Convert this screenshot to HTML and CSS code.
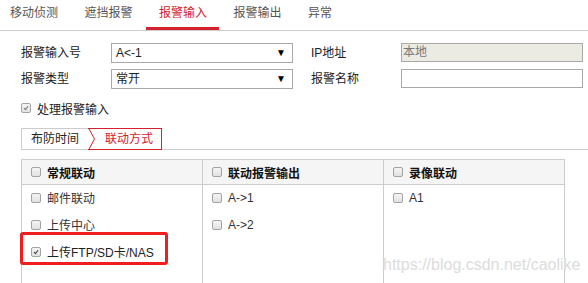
FILE: index.html
```html
<!DOCTYPE html>
<html lang="zh-CN">
<head>
    <meta charset="UTF-8">
    <title>报警输入</title>
    <link rel="stylesheet" href="styles.css">
</head>
<body>
    <div class="tabs">
        <div class="tab">移动侦测</div>
        <div class="tab">遮挡报警</div>
        <div class="tab active">报警输入</div>
        <div class="tab">报警输出</div>
        <div class="tab">异常</div>
    </div>

    <div class="form">
        <div class="grid">
            <label>报警输入号</label>
            <div class="select"><span>A&lt;-1</span><span class="arrow">▼</span></div>
            <label>IP地址</label>
            <div class="input disabled">本地</div>
            <label>报警类型</label>
            <div class="select"><span>常开</span><span class="arrow">▼</span></div>
            <label>报警名称</label>
            <div class="input"></div>
        </div>
        <div class="check-row">
            <span class="cb checked disabled"><svg viewBox="0 0 10 10"><polyline points="2.5,5 4.3,7 7.6,2.8" /></svg></span>
            <span>处理报警输入</span>
        </div>

        <div class="subtabs">
            <div class="subtab first">布防时间</div>
            <div class="subtab current">
                <svg class="chev" viewBox="0 0 8 22" width="8" height="22"><path d="M0 0.5 H8 M0 21.5 H8 M0.5 0 L6.5 11 L0.5 22" /></svg>
                <span class="label">联动方式</span>
            </div>
        </div>

        <div class="table">
            <div class="col">
                <div class="head"><span class="cb"></span>常规联动</div>
                <div class="body">
                    <div class="item"><span class="cb"></span>邮件联动</div>
                    <div class="item"><span class="cb"></span>上传中心</div>
                    <div class="item marked"><span class="cb checked"><svg viewBox="0 0 10 10"><polyline points="2.5,5 4.3,7 7.6,2.8" /></svg></span>上传FTP/SD卡/NAS</div>
                </div>
            </div>
            <div class="col">
                <div class="head"><span class="cb"></span>联动报警输出</div>
                <div class="body">
                    <div class="item"><span class="cb"></span>A-&gt;1</div>
                    <div class="item"><span class="cb"></span>A-&gt;2</div>
                </div>
            </div>
            <div class="col">
                <div class="head"><span class="cb"></span>录像联动</div>
                <div class="body">
                    <div class="item"><span class="cb"></span>A1</div>
                </div>
            </div>
        </div>
    </div>

    <div class="watermark">https://blog.csdn.net/caolike</div>
</body>
</html>
```

FILE: styles.css
```css
body {
    margin: 0;
    font-family: "Liberation Sans", "Noto Sans CJK SC", sans-serif;
    font-size: 12px;
    color: #222;
    background: #fff;
    overflow: hidden;
}
.tabs {
    display: flex;
    gap: 26.5px;
    height: 30px;
    padding-left: 10px;
    border-bottom: 1px solid #ccc;
}
.tab {
    position: relative;
    line-height: 26px;
    color: #555;
}
.tab.active {
    color: #d3212d;
}
.tab.active::after {
    content: "";
    position: absolute;
    left: -13px;
    right: -12px;
    bottom: 0;
    height: 3px;
    background: #d3212d;
}
.form {
    padding: 12px 0 0 21px;
}
.grid {
    display: grid;
    grid-template-columns: 90px 182px 108px 182px;
    grid-auto-rows: 20px;
    row-gap: 6px;
}
.grid label {
    line-height: 20px;
    color: #222;
}
.grid label:nth-of-type(2n) {
    padding-left: 18px;
}
.select, .input {
    box-sizing: border-box;
    border: 1px solid #a9a9a9;
    height: 20px;
    line-height: 18px;
    padding: 0 4px;
    display: flex;
    justify-content: space-between;
}
.select .arrow {
    font-size: 10px;
    color: #000;
    padding-right: 2px;
}
.input {
    height: 19px;
    line-height: 17px;
    padding: 0 1px;
}
.input.disabled {
    background: #ebebe4;
    color: #777;
}
.check-row {
    display: flex;
    align-items: center;
    gap: 6px;
    height: 20px;
    margin-top: 9px;
}
.cb {
    box-sizing: border-box;
    display: inline-block;
    width: 10px;
    height: 10px;
    border: 1px solid #a3a3a3;
    border-radius: 2px;
    background: linear-gradient(#f4f4f4, #e2e2e2);
    flex: none;
}
.cb svg {
    display: block;
    width: 8px;
    height: 8px;
}
.cb svg polyline {
    fill: none;
    stroke: #444;
    stroke-width: 1.4;
}
.cb.disabled svg polyline {
    stroke: #777;
}
.subtabs {
    display: flex;
    margin-top: 10px;
    height: 21px;
    border-bottom: 1px solid #ccc;
}
.subtab {
    box-sizing: border-box;
    height: 22px;
    line-height: 20px;
}
.subtab.first {
    width: 67px;
    padding-left: 9px;
    border-left: 1px solid #ccc;
    border-top: 1px solid #ccc;
}
.subtab.current {
    display: flex;
    color: #d3212d;
}
.subtab .chev {
    flex: none;
}
.subtab .chev path {
    fill: none;
    stroke: #d3212d;
    stroke-width: 1;
}
.subtab .label {
    border-top: 1px solid #d3212d;
    border-bottom: 1px solid #d3212d;
    border-right: 1px solid #d3212d;
    padding: 0 8px 0 9px;
}
.table {
    display: grid;
    grid-template-columns: repeat(3, 181px);
    width: 543px;
    margin-top: 9px;
    border: 1px solid #ccc;
    border-right: none;
}
.col {
    border-right: 1px solid #ccc;
}
.head {
    display: flex;
    align-items: center;
    gap: 6px;
    height: 24px;
    padding-left: 9px;
    background: #f5f5f5;
    border-bottom: 1px solid #ccc;
    font-weight: bold;
    color: #111;
}
.body {
    height: 110px;
}
.item {
    display: flex;
    align-items: center;
    gap: 6px;
    height: 27px;
    padding-left: 9px;
    color: #333;
}
.item:first-child {
    margin-top: -1px;
}
.item.marked {
    position: relative;
    color: #222;
}
.item.marked::after {
    content: "";
    position: absolute;
    left: -2px;
    top: -6px;
    width: 142px;
    height: 27px;
    border: 3px solid #f01e1e;
    border-radius: 3px;
}
.watermark {
    position: absolute;
    left: 383px;
    top: 256px;
    font-size: 16px;
    color: #dcdcdc;
    text-shadow: 0 0 1px #fff;
}
```
